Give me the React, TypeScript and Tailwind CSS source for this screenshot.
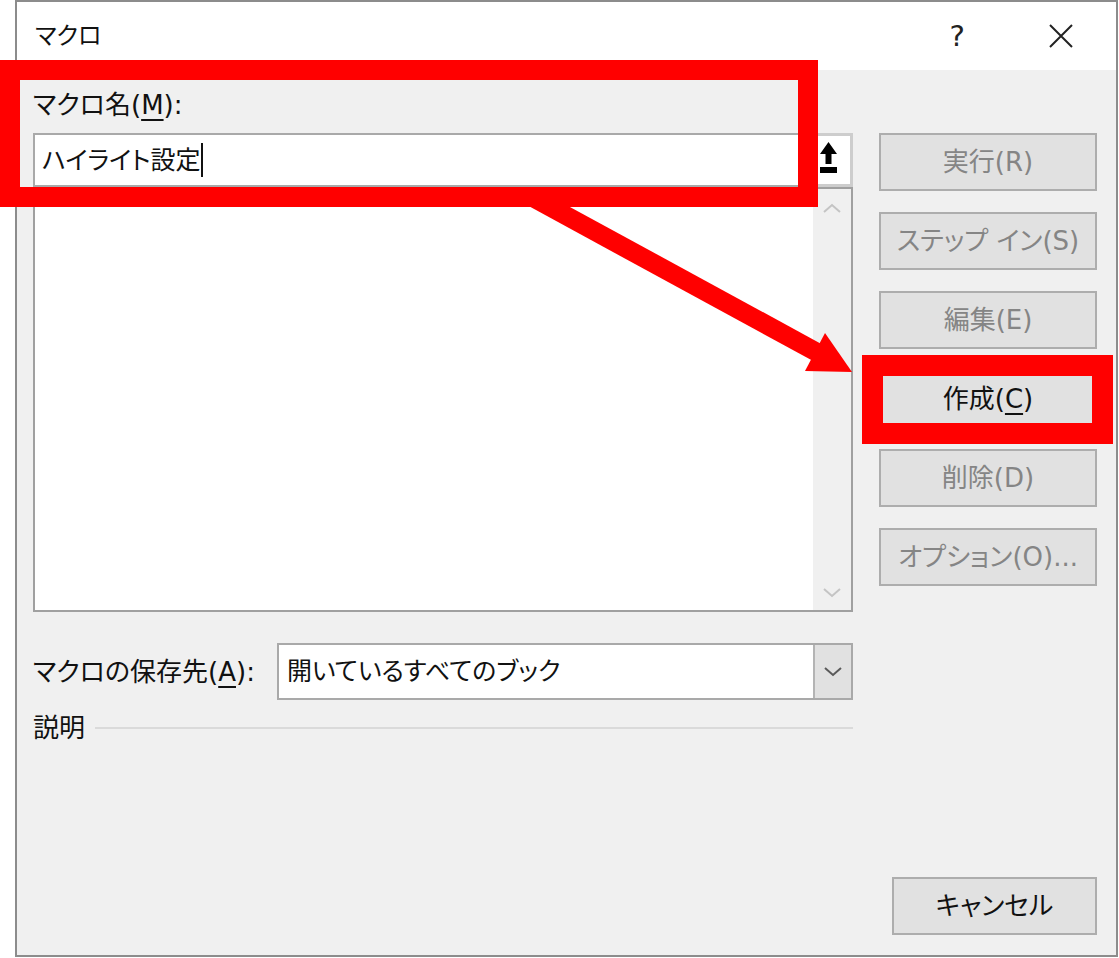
import React from 'react'

const btnBase =
  'h-[58px] bg-[#e1e1e1] border-2 border-[#adadad] flex items-center justify-center text-[26px] leading-none'

function Chevron({ up, color }: { up?: boolean; color: string }) {
  return (
    <svg width="18" height="10" viewBox="0 0 18 10">
      <polyline
        points={up ? '1,9 9,2 17,9' : '1,1 9,8 17,1'}
        fill="none"
        stroke={color}
        strokeWidth="2"
      />
    </svg>
  )
}

function SideButton({ label, enabled }: { label: React.ReactNode; enabled?: boolean }) {
  return (
    <div className={`${btnBase} w-[218px] mb-[21px] ${enabled ? 'text-[#111]' : 'text-[#858585]'}`}>
      {label}
    </div>
  )
}

export default function App() {
  return (
    <div className="relative w-[1119px] h-[958px] bg-white overflow-hidden font-['DejaVu_Sans','Noto_Sans_CJK_JP',sans-serif] [font-feature-settings:'palt'] text-[#111]">
      {/* dialog */}
      <div className="ml-[15px] w-[1103px] h-[957px] border-2 border-[#8c8c8c] flex flex-col">
        {/* title bar */}
        <div className="h-[68px] bg-white flex items-center pl-[18px] pr-[43px]">
          <span className="text-[24px] leading-none">マクロ</span>
          <span className="ml-auto text-[29px] leading-none text-[#222]">?</span>
          <svg className="ml-[84px]" width="24" height="24" viewBox="0 0 24 24">
            <path d="M1 1 L23 23 M23 1 L1 23" stroke="#222" strokeWidth="2" />
          </svg>
        </div>

        {/* body */}
        <div className="flex-1 bg-[#f0f0f0] flex pl-[16px] pr-[19px]">
          {/* left column */}
          <div className="w-[820px] flex flex-col">
            <div className="mt-[18px] h-[34px] flex items-center text-[26px] leading-none">
              マクロ名(<span className="underline underline-offset-[5px]">M</span>):
            </div>

            <div className="mt-[11px] h-[54px] flex">
              <div className="flex-1 bg-white border-2 border-[#a9a9a9] flex items-center pl-[7px]">
                <span className="text-[25px] leading-none">ハイライト設定</span>
                <span className="ml-[1px] w-[2px] h-[34px] bg-[#111]" />
              </div>
              <div className="w-[38px] bg-white border-[3px] border-[#cdcdcd] flex items-start pt-[6px] pl-[1px]">
                <svg width="19" height="31" viewBox="0 0 19 31">
                  <polygon points="9.5,0 18,12 12.5,12 12.5,22 6.5,22 6.5,12 1,12" fill="#000" />
                  <rect x="1" y="25" width="17" height="6" fill="#000" />
                </svg>
              </div>
            </div>

            {/* macro list */}
            <div className="h-[425px] bg-white border-2 border-[#a0a0a0] flex">
              <div className="flex-1" />
              <div className="w-[38px] bg-[#f0f0f0] flex flex-col items-center justify-between pt-[14px] pb-[12px]">
                <Chevron up color="#c4c4c4" />
                <Chevron color="#c4c4c4" />
              </div>
            </div>

            <div className="mt-[31px] h-[57px] flex">
              <div className="w-[244px] flex items-center text-[26px] leading-none">
                マクロの保存先(<span className="underline underline-offset-[5px]">A</span>):
              </div>
              <div className="flex-1 bg-white border-2 border-[#a9a9a9] flex">
                <div className="flex-1 flex items-center pl-[8px] text-[25px] leading-none">
                  開いているすべてのブック
                </div>
                <div className="w-[38px] bg-[#e1e1e1] border-l-2 border-[#b4b4b4] flex items-center justify-center">
                  <Chevron color="#5a5a5a" />
                </div>
              </div>
            </div>

            <div className="mt-[10px] h-[36px] flex items-center">
              <span className="text-[26px] leading-none">説明</span>
              <div className="ml-[10px] flex-1 h-[2px] bg-[#dadada]" />
            </div>
          </div>

          {/* right column */}
          <div className="ml-[26px] w-[218px] flex flex-col pt-[63px]">
            <SideButton label="実行(R)" />
            <SideButton label="ステップ イン(S)" />
            <SideButton label="編集(E)" />
            <SideButton
              enabled
              label={
                <>
                  作成(<span className="underline underline-offset-[5px]">C</span>)
                </>
              }
            />
            <SideButton label="削除(D)" />
            <SideButton label="オプション(O)..." />
            <div className={`${btnBase} w-[205px] self-end mt-auto mb-[20px] text-[#111]`}>
              キャンセル
            </div>
          </div>
        </div>
      </div>

      {/* red annotations */}
      <div className="absolute left-0 top-[60px] w-[818px] h-[147px] border-[20px] border-[#ff0000]" />
      <div className="absolute left-[862px] top-[355px] w-[251px] h-[89px] border-[21px] border-[#ff0000]" />
      <svg className="absolute left-0 top-0 pointer-events-none" width="1119" height="958" viewBox="0 0 1119 958">
        <line x1="530" y1="196" x2="820" y2="354" stroke="#ff0000" strokeWidth="19" />
        <polygon points="852,372 825,333 805,371" fill="#ff0000" />
      </svg>
    </div>
  )
}
